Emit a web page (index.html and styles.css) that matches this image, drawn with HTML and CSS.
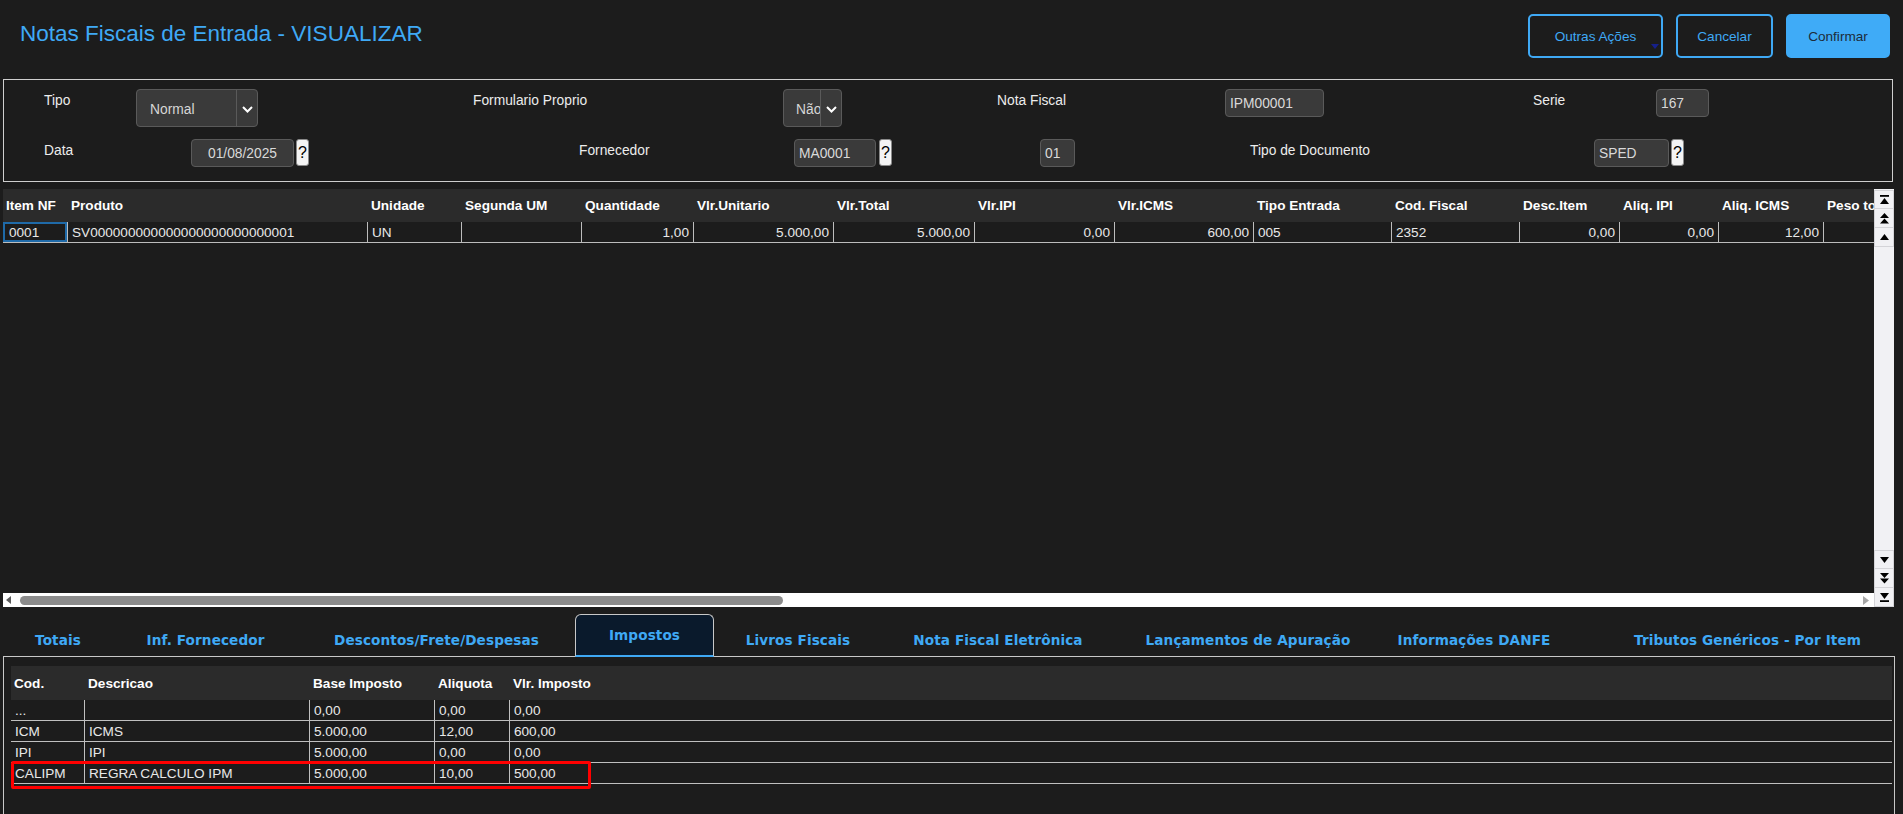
FILE: index.html
```html
<!DOCTYPE html>
<html lang="pt-BR">
<head>
<meta charset="utf-8">
<title>Notas Fiscais de Entrada - VISUALIZAR</title>
<link rel="stylesheet" href="styles.css">
</head>
<body>
<div class="page">
  <header class="topbar">
    <h1 class="title">Notas Fiscais de Entrada - VISUALIZAR</h1>
    <div class="actions">
      <button class="btn btn-outline btn-more">Outras Ações<span class="caret"></span></button>
      <button class="btn btn-outline btn-cancel">Cancelar</button>
      <button class="btn btn-primary">Confirmar</button>
    </div>
  </header>

  <section class="form-box">
    <div class="form-row row1">
      <span class="lbl l-tipo">Tipo</span>
      <div class="select sel-tipo"><span class="sel-text">Normal</span><span class="sel-arrow"><svg width="11" height="7" viewBox="0 0 11 7"><path d="M1 1 L5.5 5.5 L10 1" fill="none" stroke="#fff" stroke-width="2"/></svg></span></div>
      <span class="lbl l-form">Formulario Proprio</span>
      <div class="select sel-nao"><span class="sel-text">Não</span><span class="sel-arrow"><svg width="11" height="7" viewBox="0 0 11 7"><path d="M1 1 L5.5 5.5 L10 1" fill="none" stroke="#fff" stroke-width="2"/></svg></span></div>
      <span class="lbl l-nota">Nota Fiscal</span>
      <input class="inp i-nota" value="IPM00001" readonly>
      <span class="lbl l-serie">Serie</span>
      <input class="inp i-serie" value="167" readonly>
    </div>
    <div class="form-row row2">
      <span class="lbl l-data">Data</span>
      <input class="inp i-data" value="01/08/2025" readonly>
      <span class="help h-data">?</span>
      <span class="lbl l-forn">Fornecedor</span>
      <input class="inp i-forn" value="MA0001" readonly>
      <span class="help h-forn">?</span>
      <input class="inp i-loja" value="01" readonly>
      <span class="lbl l-tdoc">Tipo de Documento</span>
      <input class="inp i-tdoc" value="SPED" readonly>
      <span class="help h-tdoc">?</span>
    </div>
  </section>

  <section class="grid">
    <div class="grid-main">
      <div class="grid-view">
        <table class="items">
          <colgroup>
            <col class="w65"><col class="w300"><col class="w94"><col class="w120"><col class="w112">
            <col class="w140"><col class="w141"><col class="w140"><col class="w139"><col class="w138">
            <col class="w128"><col class="w100"><col class="w99"><col class="w105"><col class="w120">
          </colgroup>
          <thead>
            <tr>
              <th>Item NF</th><th>Produto</th><th>Unidade</th><th>Segunda UM</th><th>Quantidade</th>
              <th>Vlr.Unitario</th><th>Vlr.Total</th><th>Vlr.IPI</th><th>Vlr.ICMS</th><th>Tipo Entrada</th>
              <th>Cod. Fiscal</th><th>Desc.Item</th><th>Aliq. IPI</th><th>Aliq. ICMS</th><th>Peso total</th>
            </tr>
          </thead>
          <tbody>
            <tr>
              <td class="sel">0001</td>
              <td>SV000000000000000000000000001</td>
              <td>UN</td>
              <td></td>
              <td class="num">1,00</td>
              <td class="num">5.000,00</td>
              <td class="num">5.000,00</td>
              <td class="num">0,00</td>
              <td class="num">600,00</td>
              <td>005</td>
              <td>2352</td>
              <td class="num">0,00</td>
              <td class="num">0,00</td>
              <td class="num">12,00</td>
              <td class="num"></td>
            </tr>
          </tbody>
        </table>
      </div>
      <div class="hscroll">
        <span class="harrow hleft"><svg width="5" height="8" viewBox="0 0 5 8"><path d="M5 0 L0 4 L5 8Z" fill="#5c5c5c"/></svg></span>
        <span class="hthumb"></span>
        <span class="hspace"></span>
        <span class="harrow hright"><svg width="6" height="9" viewBox="0 0 6 9"><path d="M0 0 L6 4.5 L0 9Z" fill="#a6a6a6"/></svg></span>
      </div>
    </div>
    <div class="vscroll">
      <span class="vbtn"><svg width="9" height="10" viewBox="0 0 9 10"><rect x="0" y="0" width="9" height="1.8" fill="#000"/><path d="M4.5 3 L9 9 L0 9Z" fill="#000"/></svg></span>
      <span class="vbtn"><svg width="9" height="11" viewBox="0 0 9 11"><path d="M4.5 0 L9 5 L0 5Z M4.5 5.5 L9 10.5 L0 10.5Z" fill="#000"/></svg></span>
      <span class="vbtn"><svg width="9" height="6" viewBox="0 0 9 6"><path d="M4.5 0 L9 6 L0 6Z" fill="#000"/></svg></span>
      <span class="vspace"></span>
      <span class="vbtn"><svg width="9" height="6" viewBox="0 0 9 6"><path d="M0 0 L9 0 L4.5 6Z" fill="#000"/></svg></span>
      <span class="vbtn"><svg width="9" height="11" viewBox="0 0 9 11"><path d="M0 0 L9 0 L4.5 5Z M0 5.5 L9 5.5 L4.5 10.5Z" fill="#000"/></svg></span>
      <span class="vbtn"><svg width="9" height="10" viewBox="0 0 9 10"><path d="M0 1 L9 1 L4.5 7Z" fill="#000"/><rect x="0" y="8.2" width="9" height="1.8" fill="#000"/></svg></span>
    </div>
  </section>

  <nav class="tabs">
    <span class="tab tab-totais">Totais</span>
    <span class="tab tab-forn">Inf. Fornecedor</span>
    <span class="tab tab-desc">Descontos/Frete/Despesas</span>
    <span class="tab tab-imp active">Impostos</span>
    <span class="tab tab-livros">Livros Fiscais</span>
    <span class="tab tab-nfe">Nota Fiscal Eletrônica</span>
    <span class="tab tab-lanc">Lançamentos de Apuração</span>
    <span class="tab tab-danfe">Informações DANFE</span>
    <span class="tab tab-trib">Tributos Genéricos - Por Item</span>
  </nav>

  <section class="panel">
    <table class="taxes">
      <colgroup>
        <col class="t1"><col class="t2"><col class="t3"><col class="t4"><col class="t5">
      </colgroup>
      <thead>
        <tr><th>Cod.</th><th>Descricao</th><th>Base Imposto</th><th>Aliquota</th><th>Vlr. Imposto</th></tr>
      </thead>
      <tbody>
        <tr><td>...</td><td></td><td>0,00</td><td>0,00</td><td>0,00</td></tr>
        <tr><td>ICM</td><td>ICMS</td><td>5.000,00</td><td>12,00</td><td>600,00</td></tr>
        <tr><td>IPI</td><td>IPI</td><td>5.000,00</td><td>0,00</td><td>0,00</td></tr>
        <tr><td>CALIPM</td><td>REGRA CALCULO IPM</td><td>5.000,00</td><td>10,00</td><td>500,00</td></tr>
      </tbody>
    </table>
    <div class="highlight"></div>
  </section>
</div>
</body>
</html>
```

FILE: styles.css
```css
* { box-sizing: border-box; }

html, body {
  margin: 0;
  padding: 0;
  background: #1c1c1c;
  overflow: hidden;
}

body {
  font-family: "Liberation Sans", Arial, sans-serif;
  font-size: 13.6px;
  color: #e6e6e6;
  width: 1903px;
  height: 814px;
}

.page {
  display: flex;
  flex-direction: column;
  height: 814px;
}

/* ---------- top bar ---------- */
.topbar {
  height: 79px;
  display: flex;
  justify-content: space-between;
  align-items: flex-start;
}

.title {
  margin: 21px 0 0 20px;
  font-size: 22.5px;
  line-height: 26px;
  font-weight: normal;
  color: #3fa9f5;
}

.actions {
  display: flex;
  gap: 13px;
  margin: 14px 13px 0 0;
}

.btn {
  position: relative;
  height: 44px;
  border-radius: 5px;
  font-family: "Liberation Sans", Arial, sans-serif;
  font-size: 13.6px;
  padding: 0;
  cursor: pointer;
}

.btn-outline {
  background: #1c1c1c;
  border: 2px solid #3fa9f5;
  color: #3fa9f5;
}

.btn-more { width: 135px; }
.btn-cancel { width: 97px; }

.btn-primary {
  width: 104px;
  background: #3fabf7;
  border: 2px solid #3fabf7;
  color: #1d2b3a;
}

.caret {
  position: absolute;
  left: 121px;
  top: 28px;
  width: 0;
  height: 0;
  border-left: 4px solid transparent;
  border-right: 4px solid transparent;
  border-top: 5px solid #16208a;
}

/* ---------- form box ---------- */
.form-box {
  margin: 0 10px 0 3px;
  border: 1px solid #cfcfcf;
  padding: 9px 0 14px;
  display: flex;
  flex-direction: column;
  gap: 12px;
}

.form-row {
  display: flex;
  align-items: flex-start;
}

.row1 { height: 38px; }
.row2 { height: 28px; }

.lbl {
  line-height: 24px;
  color: #ececec;
  white-space: nowrap;
  font-size: 13.8px;
}

.l-tipo { margin-left: 40px; width: 92px; }
.l-form { margin-left: 215px; width: 310px; }
.l-nota { margin-left: 155px; width: 228px; }
.l-serie { margin-left: 209px; width: 123px; }
.l-data { margin-left: 40px; width: 147px; }
.l-forn { margin-left: 270px; width: 215px; }
.l-tdoc { margin-left: 175px; width: 344px; }

.select {
  display: flex;
  height: 38px;
  background: #3a3a3a;
  border: 1px solid #5a5a5a;
  border-radius: 4px;
  overflow: hidden;
}

.sel-text {
  flex: 1;
  overflow: hidden;
  white-space: nowrap;
  line-height: 38px;
  padding-top: 1px;
  color: #d6d6d6;
  font-size: 13.8px;
}

.sel-arrow {
  width: 21px;
  border-left: 1px solid #5a5a5a;
  display: flex;
  align-items: center;
  justify-content: center;
  padding-top: 2px;
}

.sel-tipo { width: 122px; }
.sel-tipo .sel-text { padding-left: 13px; }
.sel-nao { width: 59px; }
.sel-nao .sel-text { padding-left: 12px; }

.inp {
  height: 28px;
  margin: 0;
  padding: 0 4px;
  background: #3a3a3a;
  border: 1px solid #5a5a5a;
  border-radius: 4px;
  color: #d9d9d9;
  font-family: "Liberation Sans", Arial, sans-serif;
  font-size: 13.8px;
  outline: none;
}

.i-nota { width: 99px; }
.i-serie { width: 53px; }
.i-data { width: 103px; text-align: center; }
.i-forn { width: 82px; }
.i-loja { width: 35px; margin-left: 148px; }
.i-tdoc { width: 75px; }

.help {
  width: 13px;
  height: 27px;
  background: #f4f4f4;
  border: 1px solid #8a8a8a;
  border-radius: 3px;
  color: #000;
  font-size: 16px;
  line-height: 26px;
  text-align: center;
}

.h-data { margin-left: 2px; }
.h-forn { margin-left: 3px; }
.h-tdoc { margin-left: 2px; }

/* ---------- item grid ---------- */
.grid {
  margin: 7px 9px 0 3px;
  height: 418px;
  display: flex;
}

.grid-main {
  flex: 1;
  display: flex;
  flex-direction: column;
  min-width: 0;
}

.grid-view {
  flex: 1;
  overflow: hidden;
}

.items {
  table-layout: fixed;
  border-collapse: separate;
  border-spacing: 0;
  width: 1941px;
}

.w65 { width: 65px; }
.w300 { width: 300px; }
.w94 { width: 94px; }
.w120 { width: 120px; }
.w112 { width: 112px; }
.w140 { width: 140px; }
.w141 { width: 141px; }
.w139 { width: 139px; }
.w138 { width: 138px; }
.w128 { width: 128px; }
.w100 { width: 100px; }
.w99 { width: 99px; }
.w105 { width: 105px; }

.items th {
  height: 33px;
  background: #2b2b2b;
  color: #ffffff;
  font-weight: bold;
  text-align: left;
  padding: 0 3px;
  white-space: nowrap;
  overflow: hidden;
}

.items td {
  height: 21px;
  padding: 0 4px;
  border-right: 1px solid #bdbdbd;
  border-bottom: 1px solid #bdbdbd;
  color: #e8e8e8;
  white-space: nowrap;
  overflow: hidden;
}

.items td.sel {
  padding-left: 6px;
  box-shadow: inset 0 0 0 2px #1f6aa8;
}

.items td.num { text-align: right; }

.hscroll {
  height: 14px;
  background: #ffffff;
  display: flex;
  align-items: center;
}

.harrow {
  display: flex;
  align-items: center;
}

.hleft { margin-left: 3px; width: 14px; }

.hthumb {
  width: 763px;
  height: 9px;
  background: #8c8c8c;
  border-radius: 5px;
}

.hspace { flex: 1; }

.hright { width: 11px; }

.vscroll {
  width: 20px;
  background: #f1f1f4;
  display: flex;
  flex-direction: column;
  padding-top: 1px;
}

.vbtn {
  height: 19px;
  display: flex;
  align-items: center;
  justify-content: center;
  border: 1px solid #d4d4d8;
  border-top: none;
}

.vbtn:first-child { border-top: 1px solid #d4d4d8; }

.vspace { flex: 1; }

.vspace + .vbtn { border-top: 1px solid #d4d4d8; }

/* ---------- tabs ---------- */
.tabs {
  margin: 7px 8px 0 3px;
  height: 43px;
  border-bottom: 1px solid #c8c8c8;
  display: flex;
  align-items: flex-end;
}

.tab {
  height: 42px;
  padding-top: 9px;
  display: flex;
  align-items: center;
  justify-content: center;
  font-family: "DejaVu Sans", Verdana, sans-serif;
  font-weight: bold;
  font-size: 13.6px;
  letter-spacing: 0.1px;
  color: #3fa9f5;
  white-space: nowrap;
}

.tab-totais { width: 110px; }
.tab-forn { width: 185px; }
.tab-desc { width: 277px; }
.tab-imp { width: 139px; }
.tab-livros { width: 168px; }
.tab-nfe { width: 232px; }
.tab-lanc { width: 268px; }
.tab-danfe { width: 184px; }
.tab-trib { padding-left: 68px; justify-content: flex-start; }

.tab.active {
  height: 43px;
  margin-bottom: -1px;
  padding-top: 0;
  background: #0a1a2c;
  border: 1px solid #c8c8c8;
  border-bottom: 2px solid #3fa9f5;
  border-radius: 6px 6px 0 0;
}

/* ---------- taxes panel ---------- */
.panel {
  position: relative;
  flex: 1;
  margin: 0 8px 0 3px;
  border-left: 1px solid #c8c8c8;
  border-right: 1px solid #c8c8c8;
  padding: 9px 2px 0 7px;
}

.taxes {
  width: 100%;
  table-layout: fixed;
  border-collapse: separate;
  border-spacing: 0;
}

.t1 { width: 74px; }
.t2 { width: 225px; }
.t3 { width: 125px; }
.t4 { width: 75px; }

.taxes th {
  height: 34px;
  background: #2b2b2b;
  color: #ffffff;
  font-weight: bold;
  text-align: left;
  padding: 0 3px;
  white-space: nowrap;
}

.taxes td {
  height: 21px;
  padding: 0 4px;
  border-bottom: 1px solid #c0c0c0;
  color: #e8e8e8;
  white-space: nowrap;
}

.taxes td:not(:last-child) { border-right: 1px solid #c0c0c0; }

.highlight {
  position: absolute;
  left: 7px;
  top: 104px;
  width: 580px;
  height: 28px;
  border: 3px solid #ff0000;
  border-radius: 2px;
  pointer-events: none;
}
```
